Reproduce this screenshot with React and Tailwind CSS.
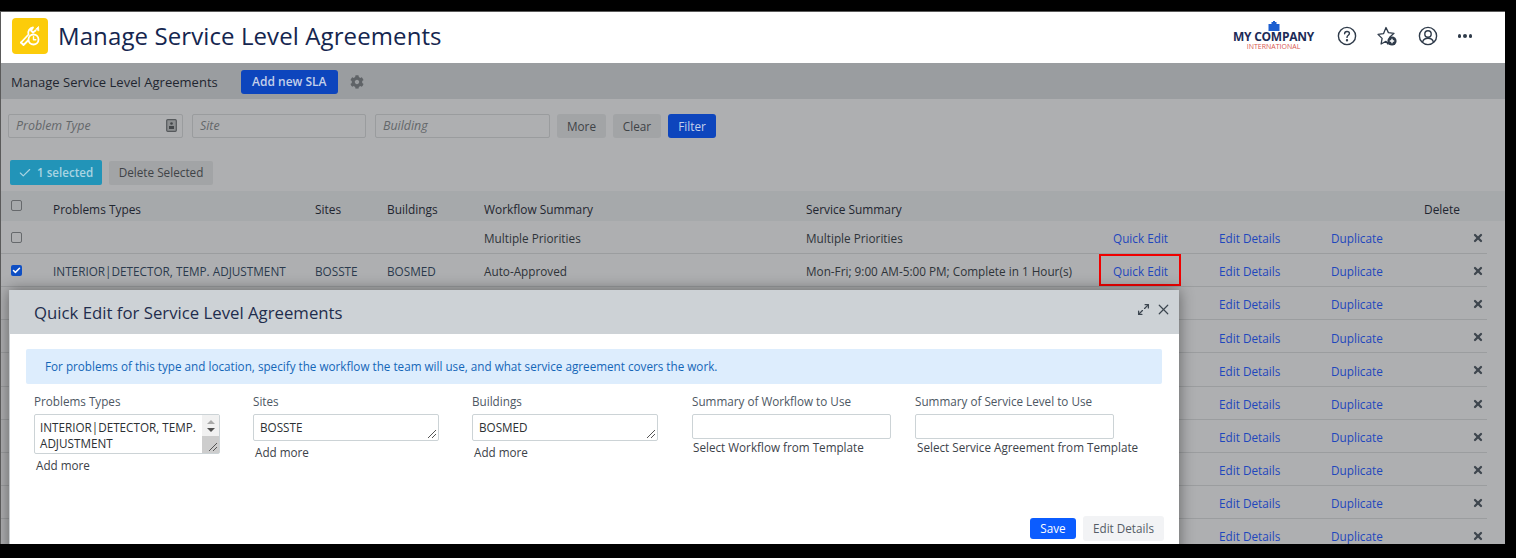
import { Check, X, Maximize2 } from 'lucide-react';
import { FaCog } from 'react-icons/fa';

const FONT = "font-['Open_Sans',sans-serif]";
const GRID = 'grid grid-cols-[52px_262px_72px_97px_322px_307px_106px_112px_93px_63px] items-center';

const rows = [
  { workflow: 'Multiple Priorities', service: 'Multiple Priorities' },
  {
    checked: true,
    problem: 'INTERIOR|DETECTOR, TEMP. ADJUSTMENT',
    site: 'BOSSTE',
    building: 'BOSMED',
    workflow: 'Auto-Approved',
    service: 'Mon-Fri; 9:00 AM-5:00 PM; Complete in 1 Hour(s)',
    outlined: true,
  },
  {}, {}, {}, {}, {}, {}, {}, {},
];

function AppIcon() {
  return (
    <div className="flex h-9 w-9 items-center justify-center rounded-[4px] bg-[#fccc0a]">
      <svg width="24" height="24" viewBox="0 0 24 24" fill="none" stroke="#fff" strokeWidth="1.8" strokeLinecap="round" strokeLinejoin="round">
        <path d="M3 18.5 L10.5 10.5 C9.5 7.5 11.5 4 15 3.5 L13 6.5 L15 8.5 L17.5 6.5" />
        <path d="M3 18.5 L5.5 21 L10 16.5" />
        <circle cx="15.5" cy="15.5" r="5" />
        <path d="M15.5 12.8 V15.7 H17.8" strokeWidth="1.4" />
        <path d="M18 5 L20.5 2.5 L20.8 6.5 Z" fill="#fff" strokeWidth="0.8" />
      </svg>
    </div>
  );
}

function CompanyLogo() {
  return (
    <div className="relative -mt-[1px] flex w-[84px] flex-col items-center leading-none">
      <svg width="12" height="10" viewBox="0 0 12 10" className="-mb-[1px]">
        <path d="M0.5 10 V3 H3.5 V1 H5 V0 H7 V1 H8.5 V3 H11.5 V10 Z" fill="#1d5fd0" />
      </svg>
      <span className="text-[12px] leading-[13px] font-bold tracking-[-0.25px] whitespace-nowrap text-[#1c2b57]">MY COMPANY</span>
      <span className="text-[7px] leading-[7px] text-[#d8564f]">INTERNATIONAL</span>
    </div>
  );
}

function HeaderIcons() {
  return (
    <div className="flex items-center text-[#2f3b4a]">
      <svg width="20" height="20" viewBox="0 0 20 20" fill="none" stroke="currentColor" strokeWidth="1.4" className="mr-[20px]">
        <circle cx="10" cy="10" r="8.6" />
        <path d="M7.6 7.8 C7.6 6.3 8.7 5.5 10 5.5 C11.4 5.5 12.4 6.4 12.4 7.6 C12.4 9.3 10 9.4 10 11.4" strokeLinecap="round" />
        <circle cx="10" cy="14.2" r="0.5" fill="currentColor" />
      </svg>
      <svg width="20" height="20" viewBox="0 0 20 20" fill="none" className="mr-[21px]">
        <path d="M9 1.5 L11.4 6.6 L17 7.3 L12.9 11 L11 18 L9 15.3 L4.1 18 L5.1 12.4 L1 8.4 L6.6 7.6 Z" stroke="currentColor" strokeWidth="1.3" strokeLinejoin="round" />
        <circle cx="15" cy="15" r="4.6" fill="#2f3b4a" />
        <path d="M15 12.8 V17.2 M12.8 15 H17.2" stroke="#fff" strokeWidth="1.4" />
      </svg>
      <svg width="20" height="20" viewBox="0 0 20 20" fill="none" stroke="currentColor" strokeWidth="1.4" className="mr-[20px]">
        <circle cx="10" cy="10" r="8.6" />
        <circle cx="10" cy="8" r="3.2" />
        <path d="M4.6 16 C5.4 13.4 7.5 12.3 10 12.3 C12.5 12.3 14.6 13.4 15.4 16" />
      </svg>
      <div className="flex gap-[2px]">
        <span className="h-[3.5px] w-[3.5px] rounded-full bg-[#2f3b4a]" />
        <span className="h-[3.5px] w-[3.5px] rounded-full bg-[#2f3b4a]" />
        <span className="h-[3.5px] w-[3.5px] rounded-full bg-[#2f3b4a]" />
      </div>
    </div>
  );
}

function FilterInput({ placeholder, icon, className }) {
  return (
    <div className={`flex h-6 items-center justify-between rounded-[2px] border border-[#9a9c9e] pr-[5px] pl-[7px] text-[12.4px] text-[#64676a] italic ${className}`}>
      <span>{placeholder}</span>
      {icon && (
        <svg width="11" height="13" viewBox="0 0 11 13" className="-mt-[2px]">
          <rect x="0.7" y="0.7" width="9.6" height="11.6" rx="1" fill="#8d8f91" stroke="#56595c" strokeWidth="1.2" />
          <circle cx="5.5" cy="4.5" r="1.3" fill="#44474a" />
          <rect x="3" y="7" width="5" height="3" fill="#44474a" />
        </svg>
      )}
    </div>
  );
}

function Box({ checked }) {
  if (checked) {
    return (
      <span className="flex h-[11px] w-[11px] items-center justify-center rounded-[2px] bg-[#0f4fc4]">
        <Check size={9} strokeWidth={4} className="text-white" />
      </span>
    );
  }
  return <span className="block h-[11px] w-[11px] rounded-[2px] border border-[#66696c]" />;
}

function TableRow({ row }) {
  return (
    <div className={`${GRID} h-[33.11px] border-b border-[#9b9d9f] pt-[4px] text-[11.75px] text-[#2f3439]`}>
      <div className="-mt-[3px] pl-[10px]"><Box checked={row.checked} /></div>
      <div className="text-[#2b3a4d]">{row.problem}</div>
      <div className="text-[#2b3a4d]">{row.site}</div>
      <div className="text-[#2b3a4d]">{row.building}</div>
      <div>{row.workflow}</div>
      <div>{row.service}</div>
      <div className="relative text-[#1f47bd]">
        {row.workflow && 'Quick Edit'}
        {row.outlined && (
          <span className="absolute top-[-9px] left-[-14px] h-[32px] w-[82px] border-2 border-[#f00000]" />
        )}
      </div>
      <div className="text-[#1f47bd]">Edit Details</div>
      <div className="text-[#1f47bd]">Duplicate</div>
      <div className="-mt-[2px] flex justify-end pr-[3px]">
        <X size={12} strokeWidth={4.5} className="text-[#3e464e]" />
      </div>
    </div>
  );
}

function Field({ label, hint, width, className, children }) {
  return (
    <div className={className} style={{ width }}>
      <div className="-mt-[1px] mb-[5px] text-[11.7px] leading-[16px] text-[#4d5763]">{label}</div>
      {children}
      {hint}
    </div>
  );
}

function Grip() {
  return (
    <svg width="10" height="10" viewBox="0 0 10 10" className="absolute right-px bottom-px" stroke="#555" strokeWidth="1">
      <path d="M1 9 L9 1 M5 9 L9 5" />
    </svg>
  );
}

function TextArea({ children }) {
  return (
    <div className="relative flex h-[27px] w-[186px] items-center rounded-[2px] border border-[#ccd3d6] pl-[6px] text-[11.7px] text-[#2b2f33]">
      {children}
      <Grip />
    </div>
  );
}

function AddMore() {
  return <div className="mt-[3px] ml-[2px] text-[11.7px] leading-[16px] text-[#3c4249]">Add more</div>;
}

function QuickEditModal() {
  return (
    <div className="absolute top-[278px] left-[8px] h-[300px] w-[1170px] border-l border-[#c9cdd0] bg-white shadow-[0_0_14px_rgba(0,0,0,0.45)]">
      <div className="flex h-[44px] items-center justify-between bg-[#cdd2d6] pr-[7px] pl-[24px]">
        <h2 className="pt-[2px] text-[16.75px] font-medium text-[#1f2d4d]">Quick Edit for Service Level Agreements</h2>
        <div className="-mt-[5px] flex items-center gap-[5px] text-[#3c4650]">
          <Maximize2 size={13} strokeWidth={2.4} />
          <X size={17} strokeWidth={1.7} />
        </div>
      </div>
      <div className="px-[16px] pt-[15px]">
        <div className="flex h-[35px] w-[1136px] items-center rounded-[2px] bg-[#ddedfd] pt-[1px] pl-[19px] text-[11.7px] text-[#1466b8]">
          For problems of this type and location, specify the workflow the team will use, and what service agreement covers the work.
        </div>
        <div className="mt-[10px] flex pl-[8px]">
          <Field label="Problems Types" width={186} className="mr-[33px]" hint={<AddMore />}>
            <div className="relative h-[40px] w-[186px] rounded-[2px] border border-[#ccd3d6] pt-[4px] pl-[5px] text-[11.7px] leading-[16px] text-[#2b2f33]">
              INTERIOR|DETECTOR, TEMP.<br />ADJUSTMENT
              <div className="absolute top-0 right-0 bottom-0 flex w-[17px] flex-col items-center bg-[#f1f1f1] pt-[5px]">
                <span className="h-0 w-0 border-x-[4px] border-b-[4px] border-x-transparent border-b-[#a9a9a9]" />
                <span className="mt-[4px] h-0 w-0 border-x-[4px] border-t-[4px] border-x-transparent border-t-[#505050]" />
                <span className="absolute right-0 bottom-0 left-0 h-[17px] bg-[#cdcdcd]" />
              </div>
              <Grip />
            </div>
          </Field>
          <Field label="Sites" width={186} className="mr-[33px]" hint={<AddMore />}>
            <TextArea>BOSSTE</TextArea>
          </Field>
          <Field label="Buildings" width={186} className="mr-[34px]" hint={<AddMore />}>
            <TextArea>BOSMED</TextArea>
          </Field>
          <Field label="Summary of Workflow to Use" width={199} className="mr-[24px]"
            hint={<div className="ml-[1px] text-[11.7px] leading-[16px] whitespace-nowrap text-[#3c4249]">Select Workflow from Template</div>}>
            <div className="h-[25px] w-[199px] rounded-[2px] border border-[#ccd3d6]" />
          </Field>
          <Field label="Summary of Service Level to Use" width={199}
            hint={<div className="ml-[2px] text-[11.7px] leading-[16px] whitespace-nowrap text-[#3c4249]">Select Service Agreement from Template</div>}>
            <div className="h-[25px] w-[199px] rounded-[2px] border border-[#ccd3d6]" />
          </Field>
        </div>
        <div className="mt-[43px] -mr-[1px] flex items-center justify-end gap-[7px]">
          <button className="h-[21px] w-[46px] rounded-[3px] bg-[#0b5cff] text-[11.7px] font-medium text-white">Save</button>
          <button className="h-[25px] w-[81px] rounded-[3px] bg-[#f2f3f5] text-[11.7px] text-[#555d66]">Edit Details</button>
        </div>
      </div>
    </div>
  );
}

export default function App() {
  return (
    <div className={`${FONT} h-[558px] w-[1516px] overflow-hidden bg-black pt-[11px]`}>
      <div className="relative h-[533px] w-[1505px] overflow-hidden border-t border-l border-[#5a5a5a] bg-[#aeafb1]">
        {/* Top bar */}
        <header className="flex h-[51px] items-center justify-between bg-white pr-[33px] pb-[3px] pl-[11px]">
          <div className="flex items-center gap-[10px]">
            <AppIcon />
            <h1 className="text-[24px] font-normal tracking-[0.1px] text-[#15264f]">Manage Service Level Agreements</h1>
          </div>
          <div className="flex items-center gap-[21px]">
            <CompanyLogo />
            <HeaderIcons />
          </div>
        </header>

        {/* Sub header */}
        <div className="flex h-[36px] items-center bg-[#9a9da0] pt-[2px] pl-[10px]">
          <span className="pt-[2px] text-[13px] tracking-[0.02px] text-[#1f2630]">Manage Service Level Agreements</span>
          <button className="ml-[23px] h-[24px] w-[97px] rounded-[3px] bg-[#0d45bd] text-[12px] font-semibold text-[#c4d0ea]">Add new SLA</button>
          <FaCog size={14} className="ml-[12px] text-[#5f6367]" />
        </div>

        {/* Filters */}
        <div className="flex items-center pt-[15px] pl-[7px]">
          <div className="flex gap-[9px]">
            <FilterInput placeholder="Problem Type" icon className="w-[175px]" />
            <FilterInput placeholder="Site" className="w-[174px]" />
            <FilterInput placeholder="Building" className="w-[175px]" />
          </div>
          <div className="ml-[7px] flex gap-[7px] text-[11.75px]">
            <button className="h-6 w-[49px] rounded-[3px] bg-[#a2a4a6] pt-[1px] text-[#3f4347]">More</button>
            <button className="h-6 w-[48px] rounded-[3px] bg-[#a2a4a6] pt-[1px] text-[#3f4347]">Clear</button>
            <button className="h-6 w-[48px] rounded-[3px] bg-[#0d45bd] pt-[1px] text-[#c4d0ea]">Filter</button>
          </div>
        </div>

        {/* Bulk actions */}
        <div className="mt-[22px] flex items-center pl-[9px]">
          <div className="flex h-[25px] w-[92px] items-center gap-[5px] rounded-[2px] bg-[#2294b8] pt-[1px] pl-[8px] text-[11.6px] font-semibold text-[#a9d4e2]">
            <Check size={14} strokeWidth={2} />
            1 selected
          </div>
          <button className="ml-[7px] h-[24px] w-[104px] rounded-[2px] bg-[#a2a4a6] pt-[1px] text-[11.75px] text-[#3f4347]">Delete Selected</button>
        </div>

        {/* Table */}
        <div className="mt-[6px] w-[1486px]">
          <div className={`${GRID} h-[30px] w-[1504px] bg-[#a6a9ab] pt-[8px] text-[11.9px] font-medium text-[#1f2630]`}>
            <div className="-mt-[10px] pl-[10px]"><Box /></div>
            <div>Problems Types</div>
            <div>Sites</div>
            <div>Buildings</div>
            <div>Workflow Summary</div>
            <div>Service Summary</div>
            <div />
            <div />
            <div />
            <div>Delete</div>
          </div>
          {rows.map((row, i) => <TableRow key={i} row={row} />)}
        </div>

        <QuickEditModal />
      </div>
    </div>
  );
}
